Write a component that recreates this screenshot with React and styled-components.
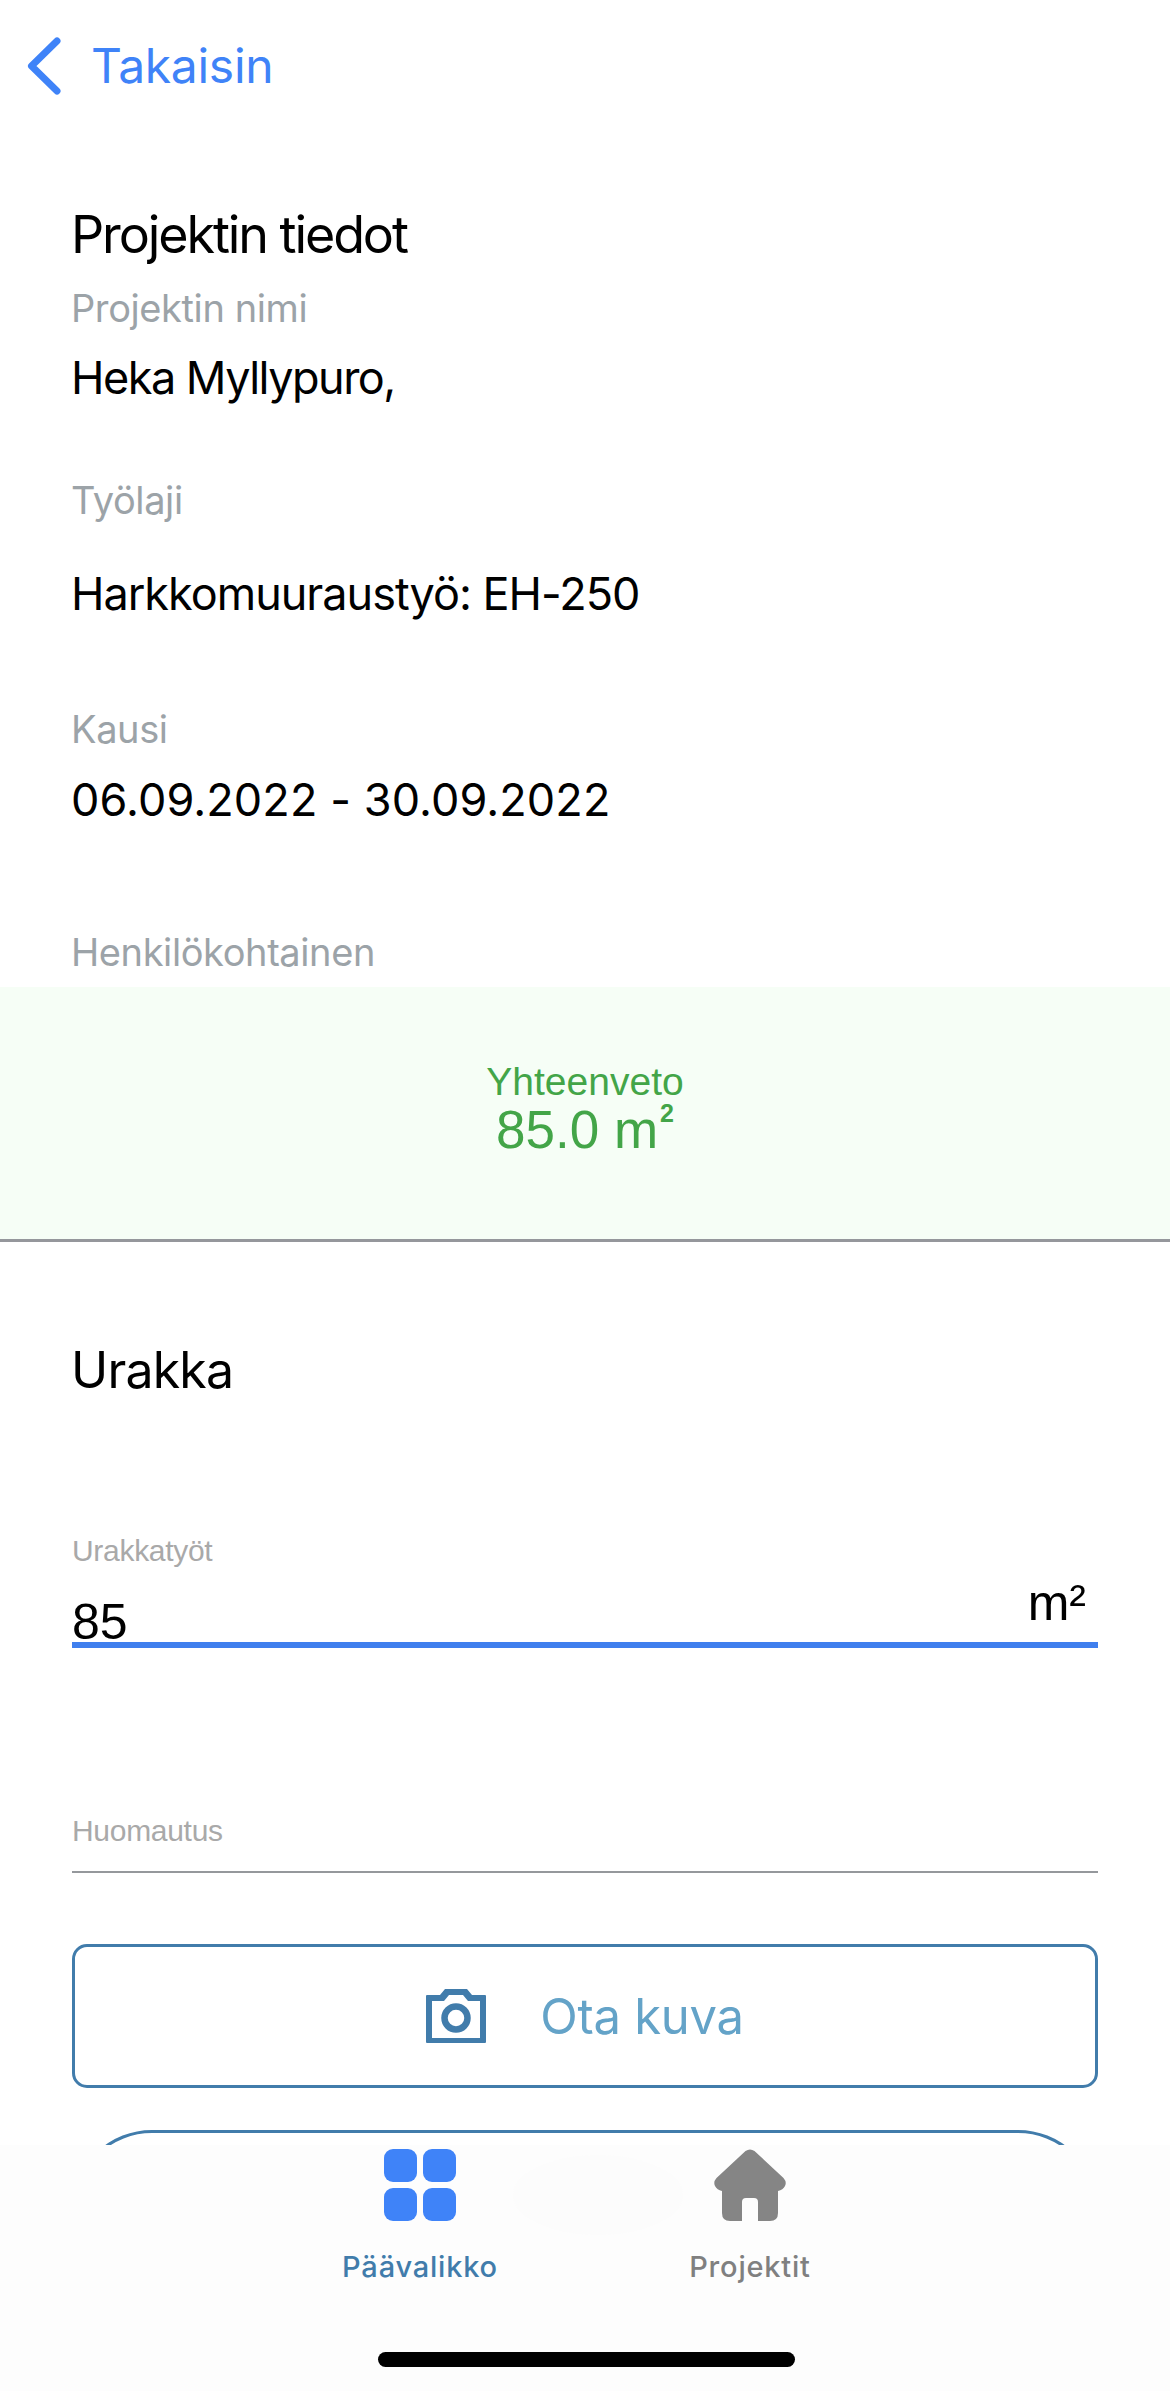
import React from 'react';
import styled, { createGlobalStyle } from 'styled-components';

const Global = createGlobalStyle`
  html, body { margin: 0; padding: 0; background: #fff; }
  * { box-sizing: border-box; }
`;
const Screen = styled.div`
  position: relative; width: 1170px; height: 2391px; overflow: hidden; background: #fff;
  font-family: Inter, "Liberation Sans", sans-serif; color: #000;
`;
const Header = styled.div`
  display: flex; align-items: center; gap: 30px; height: 56px; margin-top: 38px; padding-left: 25px;
`;
const BackText = styled.span`
  font-size: 48px; line-height: 56px; color: #3f83f8; letter-spacing: -0.3px;
`;
const Info = styled.section`
  display: flex; flex-direction: column; padding: 0 71px 0 71px; margin-top: 109px;
`;
const Title = styled.h2`
  margin: 0; font-weight: 400; font-size: 52px; line-height: 64px; letter-spacing: -2.1px;
`;
const Label = styled.div`
  font-size: 38px; line-height: 46px; color: #9ca3a8; letter-spacing: -0.4px; margin-top: ${p => p.$top}px;
`;
const Value = styled.div`
  font-size: 45px; line-height: 58px; letter-spacing: ${p => p.$spacing}px; margin-top: ${p => p.$top}px;
`;
const Summary = styled.div`
  display: flex; flex-direction: column; align-items: center; justify-content: center;
  height: 255px; margin-top: 12px; background: #f6fef6; border-bottom: 3px solid #95979c;
  font-family: "Liberation Sans", Arial, sans-serif; color: #43a548; padding-bottom: 8px;
`;
const SummaryLabel = styled.div` font-size: 39px; line-height: 40px; `;
const SummaryValue = styled.div`
  font-size: 53px; line-height: 52px; margin-top: 2px;
  & > sup { font-size: 25px; font-weight: 700; line-height: 0; vertical-align: 26px; margin-left: 2px; }
`;
const Form = styled.section`
  display: flex; flex-direction: column; padding: 0 72px;
`;
const SectionTitle = styled.h2`
  margin: 96px 0 0 -1px; font-weight: 400; font-size: 50px; line-height: 64px; letter-spacing: -0.8px;
`;
const FieldLabel = styled.div`
  font-family: "Liberation Sans", Arial, sans-serif; font-size: 30px; line-height: 34px;
  color: #a9a9a9; letter-spacing: -0.3px; margin-top: ${p => p.$top}px;
`;
const InputRow = styled.div`
  display: flex; justify-content: space-between; align-items: flex-start;
  height: ${p => p.$height}px; border-bottom: ${p => p.$active ? '6px solid #3f7fee' : '2px solid #95989c'};
  font-family: "Liberation Sans", Arial, sans-serif; font-size: 50px; line-height: 54px;
`;
const InputValue = styled.span` margin-top: 27px; `;
const Unit = styled.span` margin-right: 12px; margin-top: 8px; `;
const OutlineButton = styled.div`
  display: flex; align-items: center; justify-content: center; gap: 54px;
  height: ${p => p.$height}px; margin-top: ${p => p.$top}px; flex: none;
  border: 3px solid #417cab; border-radius: ${p => p.$radius}px;
  color: #64a3c8; font-size: 49px; letter-spacing: -0.3px;
`;
const TabBar = styled.nav`
  position: absolute; left: 0; right: 0; bottom: 0; height: 246px; background: #fdfdfd;
  display: flex; justify-content: center; padding-top: 4px;
`;
const Tab = styled.div`
  width: 330px; display: flex; flex-direction: column; align-items: center;
`;
const TabLabel = styled.span`
  margin-top: 28px; font-size: 29px; line-height: 36px; font-weight: 500; letter-spacing: 0.8px;
  color: ${p => p.$color};
`;
const Smudge = styled.div`
  position: absolute; left: 513px; top: 10px; width: 170px; height: 80px; border-radius: 50%; background: #fcfcfc;
`;
const HomeIndicator = styled.div`
  position: absolute; left: 378px; bottom: 24px; width: 417px; height: 15px; border-radius: 8px; background: #000;
`;

const Chevron = () => (
  <svg width="36" height="58" viewBox="0 0 36 58" fill="none">
    <path d="M32 4 L6.5 29 L32 54" stroke="#3f83f8" strokeWidth="7" strokeLinecap="round" strokeLinejoin="round" />
  </svg>
);
const Camera = () => (
  <svg width="60" height="54" viewBox="0 0 60 54" fill="none">
    <path fillRule="evenodd" fill="#417cab" d="M19 0 H41 L46 6 H59 Q60 6 60 7 V53 Q60 54 59 54 H1 Q0 54 0 53 V7 Q0 6 1 6 H14 Z M6 12 V49 H54 V12 H42 L37 6 H23 L18 12 Z" />
    <circle cx="30" cy="29" r="11.5" stroke="#417cab" strokeWidth="6.5" />
  </svg>
);
const GridIcon = () => (
  <svg width="72" height="72" viewBox="0 0 72 72" fill="#3f83f8">
    <rect x="0" y="0" width="33" height="33" rx="9" />
    <rect x="39" y="0" width="33" height="33" rx="9" />
    <rect x="0" y="39" width="33" height="33" rx="9" />
    <rect x="39" y="39" width="33" height="33" rx="9" />
  </svg>
);
const HomeIcon = () => (
  <svg width="72" height="72" viewBox="0 0 72 72" fill="#858585">
    <path d="M31.5 2 Q36 -1 40.5 2 L69.5 29 Q73 33 71 37 Q69 41 64 42 V64 Q64 72 56 72 H44 V53 Q44 49 40 49 H32 Q28 49 28 53 V72 H16 Q8 72 8 64 V42 Q3 41 1 37 Q-1 33 2.5 29 Z" />
  </svg>
);

export default function App() {
  return (
    <Screen>
      <Global />
      <Header>
        <Chevron />
        <BackText>Takaisin</BackText>
      </Header>
      <Info>
        <Title>Projektin tiedot</Title>
        <Label $top={18}>Projektin nimi</Label>
        <Value $top={18} $spacing={-1.5}>Heka Myllypuro,</Value>
        <Label $top={70}>Työlaji</Label>
        <Value $top={42} $spacing={-1}>Harkkomuuraustyö: EH-250</Value>
        <Label $top={83}>Kausi</Label>
        <Value $top={19} $spacing={0.1}>06.09.2022 - 30.09.2022</Value>
        <Label $top={100}>Henkilökohtainen</Label>
      </Info>
      <Summary>
        <SummaryLabel>Yhteenveto</SummaryLabel>
        <SummaryValue>85.0 m<sup>2</sup></SummaryValue>
      </Summary>
      <Form>
        <SectionTitle>Urakka</SectionTitle>
        <FieldLabel $top={132}>Urakkatyöt</FieldLabel>
        <InputRow $active $height={80}>
          <InputValue>85</InputValue>
          <Unit>m²</Unit>
        </InputRow>
        <FieldLabel $top={166}>Huomautus</FieldLabel>
        <InputRow $height={25} />
        <OutlineButton $top={71} $height={144} $radius={15}>
          <Camera />
          <span>Ota kuva</span>
        </OutlineButton>
        <OutlineButton $top={42} $height={170} $radius={80} />
      </Form>
      <TabBar>
        <Smudge />
        <Tab>
          <GridIcon />
          <TabLabel $color="#417cab">Päävalikko</TabLabel>
        </Tab>
        <Tab>
          <HomeIcon />
          <TabLabel $color="#808080">Projektit</TabLabel>
        </Tab>
        <HomeIndicator />
      </TabBar>
    </Screen>
  );
}
